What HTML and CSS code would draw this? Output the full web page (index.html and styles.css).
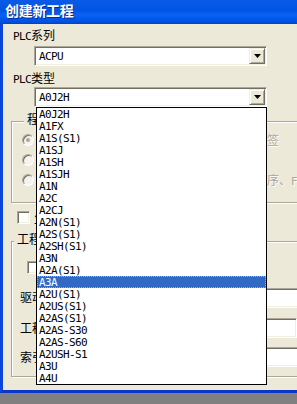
FILE: index.html
```html
<!DOCTYPE html>
<html lang="zh-CN">
<head>
    <meta charset="UTF-8">
    <meta name="viewport" content="width=device-width, initial-scale=1.0">
    <title>创建新工程</title>
    <link rel="stylesheet" href="styles.css">
</head>
<body>
    <div class="window">
        <div class="titlebar">创建新工程</div>

        <div class="dialog">
            <div class="field-label"><span class="en">PLC</span>系列</div>
            <div class="combo">
                <span class="combo-text">ACPU</span>
                <span class="combo-btn"><svg width="7" height="4" viewBox="0 0 7 4"><path d="M0 0H7L3.5 4Z"/></svg></span>
            </div>

            <div class="field-label label-type"><span class="en">PLC</span>类型</div>
            <div class="combo combo-type">
                <span class="combo-text">A0J2H</span>
                <span class="combo-btn"><svg width="7" height="4" viewBox="0 0 7 4"><path d="M0 0H7L3.5 4Z"/></svg></span>

                <!-- opened drop down list -->
                <ul class="droplist">
                    <li>A0J2H</li>
                    <li>A1FX</li>
                    <li>A1S(S1)</li>
                    <li>A1SJ</li>
                    <li>A1SH</li>
                    <li>A1SJH</li>
                    <li>A1N</li>
                    <li>A2C</li>
                    <li>A2CJ</li>
                    <li>A2N(S1)</li>
                    <li>A2S(S1)</li>
                    <li>A2SH(S1)</li>
                    <li>A3N</li>
                    <li>A2A(S1)</li>
                    <li class="selected">A3A</li>
                    <li>A2U(S1)</li>
                    <li>A2US(S1)</li>
                    <li>A2AS(S1)</li>
                    <li>A2AS-S30</li>
                    <li>A2AS-S60</li>
                    <li>A2USH-S1</li>
                    <li>A3U</li>
                    <li>A4U</li>
                </ul>
            </div>

            <fieldset class="group group-program">
                <legend>程序类型</legend>
                <div class="radio-grid">
                    <div class="radio-row disabled"><span class="radio checked"></span>梯形图</div>
                    <div class="radio-row disabled"><span class="radio"></span>不使用标签</div>
                    <div class="radio-row disabled"><span class="radio"></span><span class="en">SFC</span></div>
                    <div class="radio-row disabled"><span class="radio"></span>使用标签</div>
                    <div class="radio-row disabled"><span class="radio"></span><span class="en">MELSAP-L</span></div>
                    <div class="radio-note disabled"><span class="en">(</span>使用<span class="en">ST</span>程序、<span class="en">FB</span>、结构体时选择<span class="en">)</span></div>
                </div>
            </fieldset>

            <div class="check-row"><span class="checkbox"></span>生成和程序名同名的软元件内存数据</div>

            <fieldset class="group group-project">
                <legend>工程名设定</legend>
                <div class="check-row inner-check"><span class="checkbox"></span>设置工程名</div>
                <div class="form-row row-drive">
                    <span class="form-label">驱动器<span class="en">/</span>路径</span>
                    <span class="edit edit-wide"></span>
                </div>
                <div class="form-row row-name">
                    <span class="form-label">工程名</span>
                    <span class="edit edit-name"></span>
                </div>
                <div class="form-row row-index">
                    <span class="form-label">索引</span>
                    <span class="edit edit-wide"></span>
                </div>
            </fieldset>
        </div>
    </div>
</body>
</html>
```

FILE: styles.css
```css
html, body {
    margin: 0;
    padding: 0;
    overflow: hidden;
}

body {
    width: 297px;
    height: 404px;
    background-color: #808080;
    font-family: "Noto Sans CJK SC", sans-serif;
    font-size: 12px;
    line-height: 12px;
    color: #000;
}

.en {
    font-family: "DejaVu Sans Mono", monospace;
    font-size: 11px;
    letter-spacing: -0.62px;
}

.window {
    width: 400px;
    height: 393px;
    box-sizing: border-box;
    border-left: 3px solid #0b46db;
    border-bottom: 3px solid #0a37c9;
    background-color: #ece9d8;
}

.titlebar {
    height: 24px;
    margin-left: -3px;
    padding-left: 5px;
    line-height: 20px;
    font-size: 14px;
    font-weight: bold;
    letter-spacing: -0.3px;
    color: #fff;
    text-shadow: 1px 1px 0 #0a2a8c;
    background: linear-gradient(to bottom, #0a5ae8 0%, #0054e3 45%, #0a63f4 62%, #0058ec 78%, #0050dc 92%, #0040c4 100%);
}

.dialog {
    padding: 5px 20px 0 8px;
}

.field-label {
    height: 12px;
    margin-left: 2px;
}

.label-type {
    margin-top: 6px;
}

/* combo boxes */
.combo {
    position: relative;
    display: flex;
    align-items: center;
    width: 233px;
    height: 20px;
    margin: 5px 0 0 23px;
    box-sizing: border-box;
    border: 1px solid;
    border-color: #aca899 #fff #fff #aca899;
    box-shadow: inset 1px 1px #716f64, inset -1px -1px #f1efe2;
    background-color: #fff;
}

.combo-type {
    margin-top: 3px;
}

.combo-text {
    margin-left: 4px;
    padding-top: 1px;
    font-family: "DejaVu Sans Mono", monospace;
    font-size: 11px;
    letter-spacing: -0.62px;
}

.combo-btn {
    display: flex;
    align-items: center;
    justify-content: center;
    width: 16px;
    height: 16px;
    margin-left: auto;
    margin-right: 1px;
    box-sizing: border-box;
    border: 1px solid;
    border-color: #f1efe2 #716f64 #716f64 #f1efe2;
    box-shadow: inset 1px 1px #fff, inset -1px -1px #aca899;
    background-color: #ece9d8;
}

.combo-btn svg {
    display: block;
    fill: #000;
}

.droplist {
    position: absolute;
    left: 1px;
    top: calc(100% + 1px);
    z-index: 2;
    width: 231px;
    margin: 0;
    padding: 0;
    box-sizing: border-box;
    list-style: none;
    border: 1px solid #000;
    background-color: #fff;
}

.droplist li {
    height: 11px;
    padding: 1px 0 0 2px;
    line-height: 12px;
    font-family: "DejaVu Sans Mono", monospace;
    font-size: 11px;
    letter-spacing: -0.62px;
}

.droplist li.selected {
    background-color: #316ac5;
    color: #fff;
    outline: 1px dotted #e8a33d;
    outline-offset: -1px;
}

/* group boxes */
.group {
    min-width: 0;
    margin: 0;
    padding: 0;
    border: 1px solid #aca899;
    box-shadow: inset 1px 1px #fff, 1px 1px #fff;
}

.group legend {
    margin-left: 2px;
    padding: 0 3px 4px;
    line-height: 12px;
    background-color: #ece9d8;
}

.group-program {
    margin-top: 6px;
    padding: 5px 0 16px 10px;
}

.radio-grid {
    display: grid;
    grid-template-columns: 181px auto;
    grid-auto-rows: 12px;
    row-gap: 8px;
}

.radio-row {
    display: flex;
    align-items: center;
    gap: 4px;
    white-space: nowrap;
}

.radio-note {
    margin-left: 10px;
    white-space: nowrap;
}

.disabled {
    color: #aca899;
    text-shadow: 1px 1px 0 #fff;
}

.radio {
    position: relative;
    flex: none;
    width: 12px;
    height: 12px;
    box-sizing: border-box;
    border-radius: 50%;
    border: 1px solid;
    border-color: #aca899 #fff #fff #aca899;
    box-shadow: inset 1px 1px #716f64;
    background-color: #f4f3ee;
}

.radio.checked::after {
    content: "";
    position: absolute;
    left: 3px;
    top: 3px;
    width: 4px;
    height: 4px;
    border-radius: 50%;
    background-color: #aca899;
}

.check-row {
    display: flex;
    align-items: center;
    gap: 4px;
    margin: 8px 0 0 6px;
    white-space: nowrap;
}

.checkbox {
    flex: none;
    width: 13px;
    height: 13px;
    box-sizing: border-box;
    border: 1px solid;
    border-color: #aca899 #fff #fff #aca899;
    box-shadow: inset 1px 1px #716f64, inset -1px -1px #f1efe2;
    background-color: #fff;
}

.group-project {
    margin-top: 9px;
    padding: 0 0 9px;
}

.inner-check {
    margin: 12px 0 0 15px;
}

.form-row {
    display: flex;
    align-items: center;
    margin-left: 8px;
}

.row-drive {
    margin-top: 14px;
}

.row-name {
    margin-top: 10px;
}

.row-index {
    margin-top: 9px;
}

.form-label {
    width: 80px;
    white-space: nowrap;
}

.edit {
    height: 20px;
    box-sizing: border-box;
    border: 1px solid;
    border-color: #aca899 #fff #fff #aca899;
    box-shadow: inset 1px 1px #716f64, inset -1px -1px #f1efe2;
    background-color: #fff;
}

.edit-wide {
    width: 260px;
}

.edit-name {
    width: 197px;
}
```
